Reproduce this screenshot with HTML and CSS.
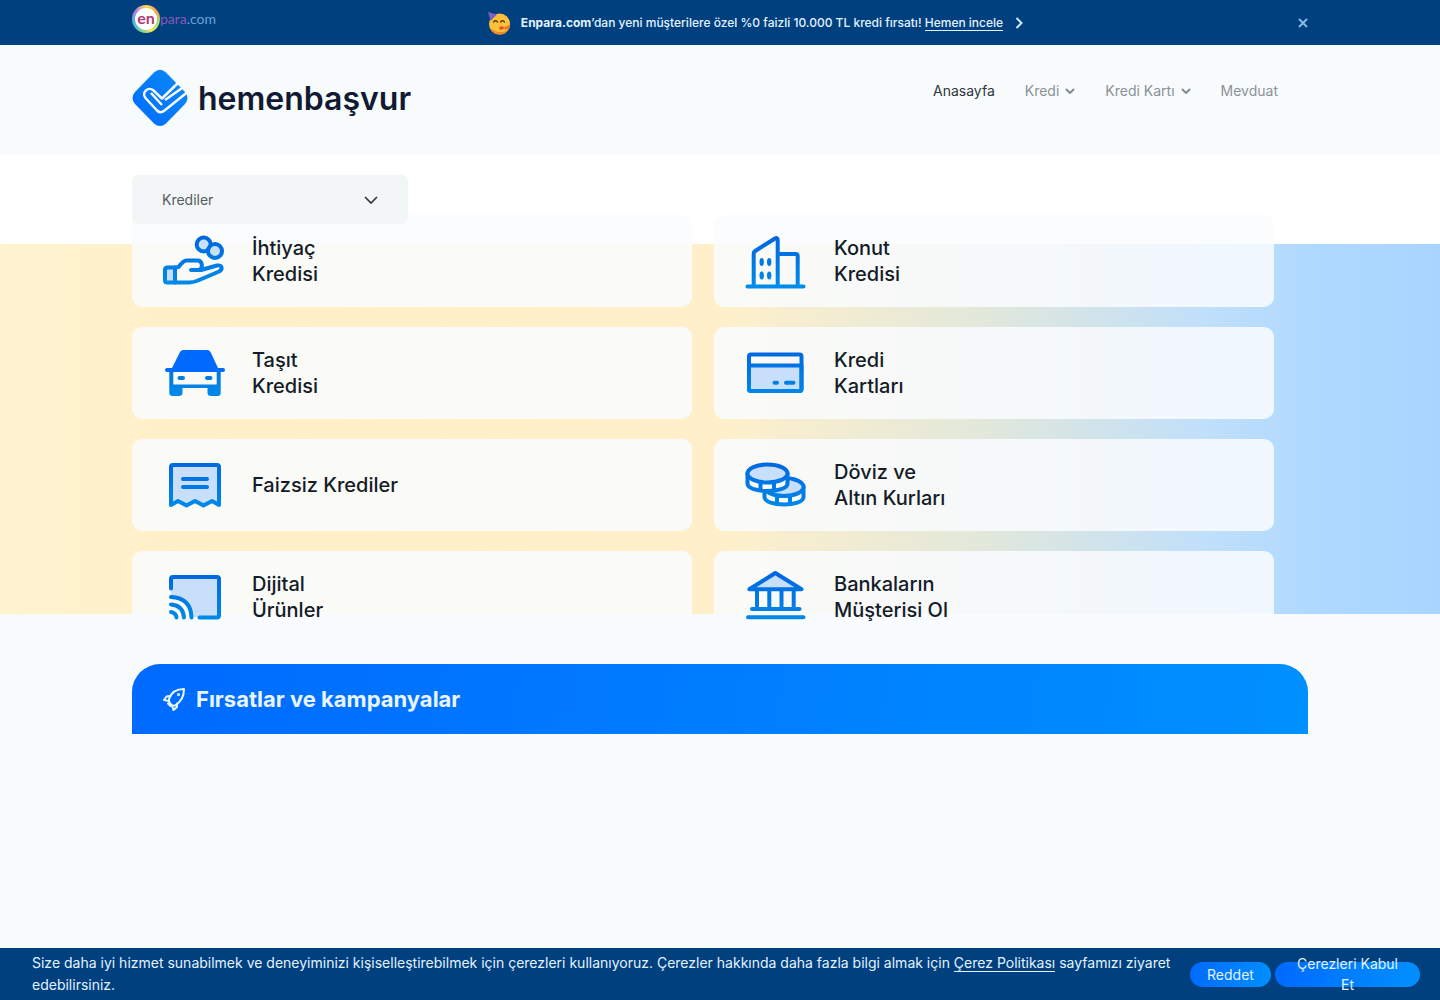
FILE: index.html
```html
<!DOCTYPE html>
<html lang="tr">
<head>
<meta charset="utf-8">
<meta name="viewport" content="width=device-width, initial-scale=1">
<title>hemenbaşvur</title>
<link rel="stylesheet" href="styles.css">
</head>
<body>
<svg class="defs" width="0" height="0" aria-hidden="true">
  <defs>
    <linearGradient id="blue" gradientUnits="userSpaceOnUse" x1="0" y1="8" x2="0" y2="58"><stop offset="0" stop-color="#0066e0"/><stop offset="1" stop-color="#008cea"/></linearGradient>
    <linearGradient id="logo" x1="0" y1="1" x2="1" y2="0"><stop offset="0" stop-color="#006aff"/><stop offset="1" stop-color="#0c8cf5"/></linearGradient>
  </defs>
</svg>

<div class="promo">
  <div class="container promo-row">
    <a class="enpara" href="#" aria-label="enpara.com">
      <span class="enpara-en">en</span><span class="enpara-para">para</span><span class="enpara-com">.com</span>
    </a>
    <p class="promo-text">
      <svg class="party" viewBox="0 0 24 24" width="24" height="24" aria-hidden="true">
        <circle cx="12.500" cy="13" r="10.500" fill="#fbc13a"/>
        <path d="M3 17a10.500 10.500 0 0 0 19 1c-5 4-13 4-19-1z" fill="#f08a24"/>
        <path d="M1 1l9 2.500L3.500 10z" fill="#7a5fc4"/>
        <path d="M6.500 11q2-2.500 4 0M13.500 11q2-2.500 4 0" fill="none" stroke="#6b3a12" stroke-width="1.300" stroke-linecap="round"/>
        <path d="M12 16l4-1 1 3-4 1z" fill="#d8542b"/>
        <path d="M17 16l6-2v3l-5 2z" fill="#e9762f"/>
      </svg>
      <span><b>Enpara.com</b>’dan yeni müşterilere özel %0 faizli 10.000 TL kredi fırsatı! <a href="#">Hemen incele</a></span>
      <svg viewBox="0 0 8 12" width="8" height="12" aria-hidden="true"><path d="M1.500 1L6.500 6l-5 5" fill="none" stroke="#cfeaff" stroke-width="2"/></svg>
    </p>
    <button class="promo-close" type="button" aria-label="Kapat">
      <svg viewBox="0 0 10 10" width="10" height="10"><path d="M1 1l8 8M9 1l-8 8" fill="none" stroke="#86b9ea" stroke-width="2"/></svg>
    </button>
  </div>
</div>

<header class="header">
  <div class="container header-row">
    <a class="brand" href="#">
      <svg viewBox="0 0 56 58" width="56" height="58" aria-hidden="true">
        <path d="M22 3.500Q28-2 34 3.500L53 23q5 6 0 12L34 54.500q-6 5-12 0L3 35q-5-6 0-12z" fill="url(#logo)"/>
        <g fill="none" stroke="#f8fbfb" stroke-width="2.500" stroke-linejoin="round">
          <path d="M48 12L30 29.500 21.500 21.500c-5-4.500-12.500 2-8 7.500L25 41.500q3.500 3.500 7.500 0L55 23.500"/>
          <path d="M19 24l11 12M33 31L53 17"/>
        </g>
      </svg>
      <span>hemenbaşvur</span>
    </a>
    <nav class="nav">
      <a class="active" href="#">Anasayfa</a>
      <a href="#">Kredi <svg viewBox="0 0 10 6" width="10" height="6"><path d="M1 1l4 4 4-4"/></svg></a>
      <a href="#">Kredi Kartı <svg viewBox="0 0 10 6" width="10" height="6"><path d="M1 1l4 4 4-4"/></svg></a>
      <a href="#">Mevduat</a>
    </nav>
  </div>
</header>

<main>
  <section class="hero">
    <div class="container">
      <div class="picker">
        <select aria-label="Ürün grubu"><option>Krediler</option></select>
        <svg viewBox="0 0 14 8" width="14" height="8" aria-hidden="true"><path d="M1 1l6 6 6-6" fill="none" stroke="#33383d" stroke-width="1.700"/></svg>
      </div>
      <div class="cards">
        <a class="card" href="#">
          <svg class="icon" viewBox="0 0 64 64">
            <circle class="tint" cx="41.700" cy="15.500" r="7"/><circle class="tint" cx="53" cy="22" r="7"/>
            <path class="tint" d="M3 41q0-2.500 2.500-2.500H13v15H5Q3 53.500 3 51z"/>
            <path d="M13 38.500l3.500-.5q5-6.500 8-6.500h11c5 0 6 8 1.500 9.500h-8M39 41l16-4.500c6-1 6 4.500 1 6.500L36 51.500Q31 53.500 27 53.500H13"/>
          </svg>
          <span>İhtiyaç<br>Kredisi</span>
        </a>
        <a class="card" href="#">
          <svg class="icon" viewBox="0 0 64 64">
            <path d="M3.500 57.500h56M9.700 57V24.500q0-1.500 1.500-2.500L31 9.500q2.700-1.500 2.700 1.500V57M34 25h17.500q2.200 0 2.200 2.200V57"/>
            <g class="solid"><ellipse cx="17.700" cy="33" rx="2.200" ry="4"/><ellipse cx="25.200" cy="33" rx="2.200" ry="4"/><ellipse cx="17.700" cy="46.500" rx="2.200" ry="4"/><ellipse cx="25.200" cy="46.500" rx="2.200" ry="4"/></g>
          </svg>
          <span>Konut<br>Kredisi</span>
        </a>
        <a class="card" href="#">
          <svg class="icon" viewBox="0 0 64 64">
            <g class="roof"><path d="M18 11q1-2 3.500-2H45q2.500 0 3.500 2l7.500 16h5q2 0 2 2t-2 2H5q-2 0-2-2t2-2h5z"/></g>
            <g class="solid"><path d="M7.300 29h4v14.500h43.400V29h4v23q0 3-3 3H49q-3.500 0-3.500-3.500V47h-25v4.500Q20.500 55 17 55h-6.500q-3.200 0-3.200-3z"/><rect x="15.500" y="35" width="7.500" height="4" rx="2"/><rect x="43" y="35" width="7.500" height="4" rx="2"/></g>
          </svg>
          <span>Taşıt<br>Kredisi</span>
        </a>
        <a class="card" href="#">
          <svg class="icon" viewBox="0 0 64 64">
            <path class="tint" d="M5 24.500h52.500V48q0 2-2 2H7q-2 0-2-2z"/>
            <rect x="5" y="13.500" width="52.500" height="36.500" rx="2"/>
            <path d="M30.500 41.700h2.500M42 41.700h7.500"/>
          </svg>
          <span>Kredi<br>Kartları</span>
        </a>
        <a class="card" href="#">
          <svg class="icon" viewBox="0 0 64 64">
            <path class="tint" d="M9 14q0-2 2-2h44q2 0 2 2v38l-7-4-8.500 4.500L33 48l-8.500 4.500L16 48l-7 4z"/>
            <path d="M21 26h24M21 34h24"/>
          </svg>
          <span>Faizsiz Krediler</span>
        </a>
        <a class="card" href="#">
          <svg class="icon" viewBox="0 0 64 64">
            <path d="M20.500 36v8c0 10 39 10 39 0V33.500"/>
            <ellipse class="tint" cx="40" cy="34" rx="19.500" ry="9"/>
            <path d="M33 43v8M46 43v8"/>
            <path d="M3.500 20v10.500c0 10 40 10 40 0V20z" fill="#f8fafb" stroke="none"/>
            <path d="M3.500 20v10.500c0 10 40 10 40 0V20M16.500 30v7M30 30v7"/>
            <ellipse class="tint" cx="23.500" cy="20.500" rx="20" ry="9"/>
          </svg>
          <span>Döviz ve<br>Altın Kurları</span>
        </a>
        <a class="card" href="#">
          <svg class="icon" viewBox="0 0 64 64">
            <path class="wash" d="M9 12h48v40H30Q29 33 9 31z"/>
            <path d="M9 23.500V14q0-2 2-2h44q2 0 2 2v36.500q0 2-2 2H37.500M9 32q20 1 20.500 20.500M9 39.500q12 1 13 13M9 47q5 1 5.500 5.500"/>
          </svg>
          <span>Dijital<br>Ürünler</span>
        </a>
        <a class="card" href="#">
          <svg class="icon" viewBox="0 0 64 64">
            <path class="tint" d="M31.300 8L57.500 24.300H5.300z"/>
            <path d="M13 25v19M25.300 25v19M37.500 25v19M49.700 25v19M8 44h47.500M4 52.300h55.500"/>
          </svg>
          <span>Bankaların<br>Müşterisi Ol</span>
        </a>
      </div>
    </div>
  </section>

  <section class="container">
    <h2 class="deals">
      <svg viewBox="0 0 24 24" width="24" height="24" fill="none" stroke="#e9f6ff" stroke-width="2" stroke-linejoin="round" stroke-linecap="round" aria-hidden="true">
        <path d="M7 12C9 6 14 2 22 2c0 7-3 13-9 16.500-3 1-7-3-6-6.500z"/>
        <path d="M8 9L4.500 9.500 2 13l5 1M15 16.500l0 3.500-3.500 3-1.500-4.500M6 16.500l2.500 2.500"/>
        <circle cx="16.500" cy="7.500" r=".6"/>
      </svg>
      Fırsatlar ve kampanyalar
    </h2>
  </section>
</main>

<aside class="cookies">
  <p>Size daha iyi hizmet sunabilmek ve deneyiminizi kişiselleştirebilmek için çerezleri kullanıyoruz. Çerezler hakkında daha fazla bilgi almak için <a href="#">Çerez Politikası</a> sayfamızı ziyaret edebilirsiniz.</p>
  <div class="cookie-actions">
    <button class="pill" type="button">Reddet</button>
    <button class="pill pill-wide" type="button">Çerezleri Kabul Et</button>
  </div>
</aside>
</body>
</html>
```
FILE: styles.css
```css
* { box-sizing: border-box; }

body {
  margin: 0;
  min-height: 100vh;
  background: #f8fbfb;
  color: #141c28;
  font-family: Inter, "Liberation Sans", sans-serif;
  font-size: 14px;
}

a { color: inherit; text-decoration: none; }
p, h2 { margin: 0; }
button { border: 0; font: inherit; cursor: pointer; }
svg { flex: none; }
.defs { position: absolute; }

.container {
  max-width: 1240px;
  margin: 0 auto;
  padding: 0 32px;
}

/* Promo strip */
.promo { background: #00407f; color: #e2f3ff; }
.promo-row {
  display: grid;
  grid-template-columns: 1fr auto 1fr;
  align-items: center;
  height: 45px;
}
.enpara {
  display: flex;
  align-items: center;
  align-self: start;
  margin-top: 5px;
  font-family: Lato, sans-serif;
  font-size: 14px;
  line-height: 24px;
}
.enpara-en {
  width: 28px;
  height: 28px;
  border: 3px solid transparent;
  border-radius: 50%;
  background: linear-gradient(#fff, #fff) padding-box, conic-gradient(#f6d95a, #f7a14b, #a9dc6b, #f1e35c, #6fd0a0, #44b8ee, #b67be0, #f6d95a) border-box;
  color: #b03a78;
  font-size: 16px;
  font-weight: 700;
  line-height: 20px;
  text-align: center;
}
.enpara-para { color: #8a56b8; }
.enpara-com { color: #6f9fd6; }
.promo-text {
  display: flex;
  align-items: center;
  gap: 12px;
  padding-left: 70px;
  font-size: 12px;
  font-weight: 500;
}
.promo-text a { border-bottom: 1px solid #e2f3ff; }
.party { margin-right: -2px; }
.promo-close {
  display: flex;
  justify-self: end;
  padding: 0;
  background: none;
}

/* Header */
.header-row {
  display: flex;
  justify-content: space-between;
  height: 109px;
}
.brand {
  display: flex;
  align-items: center;
  gap: 10px;
  height: 106px;
  color: #121a33;
  font-size: 32px;
  font-weight: 600;
}
.nav {
  display: flex;
  align-items: center;
  gap: 30px;
  height: 91px;
  padding-right: 30px;
  color: #8b9298;
}
.nav a { display: flex; align-items: center; gap: 6px; }
.nav svg { fill: none; stroke: #838a90; stroke-width: 2; }
.nav .active { color: #30363e; }

/* Product cards */
.hero {
  padding: 21px 0;
  background:
    linear-gradient(#fff, #fff) 0 0 / 100% 90px no-repeat,
    linear-gradient(90deg, #fff3d0 0, #ffefc8 15%, #fff0cb 50%, #e2e8da 68%, #bfdffb 84%, #aed8ff 92%, #a8d5ff 100%) 0 90px / 100% 370px no-repeat;
}
.picker {
  position: relative;
  z-index: 1;
  display: grid;
  align-items: center;
  width: 276px;
}
.picker select {
  grid-area: 1 / 1;
  height: 49px;
  padding: 0 30px;
  border: 0;
  border-radius: 6px;
  appearance: none;
  background: #f3f6f6;
  color: #555c64;
  font: inherit;
}
.picker svg {
  grid-area: 1 / 1;
  justify-self: end;
  margin-right: 30px;
  pointer-events: none;
}
.cards {
  display: grid;
  grid-template-columns: 1fr 1fr;
  gap: 20px 22px;
  margin-top: -9px;
  padding-right: 34px;
}
.card {
  display: flex;
  align-items: center;
  gap: 26px;
  height: 92px;
  padding: 0 30px;
  border-radius: 10px;
  background: rgba(249, 252, 254, .86);
  font-size: 20px;
  font-weight: 500;
  line-height: 26px;
}
.icon {
  width: 64px;
  height: 64px;
  fill: none;
  stroke: url(#blue);
  stroke-width: 4;
  stroke-linecap: round;
  stroke-linejoin: round;
}
.icon .tint { fill: #c8dffb; }
.icon .wash { fill: #c8dffb; stroke: none; }
.icon .solid { fill: url(#blue); stroke: none; }
.icon .roof { fill: #006aff; stroke: none; }

/* Campaigns */
.deals {
  display: flex;
  align-items: center;
  gap: 10px;
  height: 70px;
  padding: 0 30px;
  border-radius: 28px 28px 0 0;
  background: linear-gradient(100deg, #006aff, #0090ff);
  color: #e9f6ff;
  font-size: 22px;
  font-weight: 700;
}

/* Cookie notice */
.cookies {
  position: fixed;
  right: 0;
  bottom: 0;
  left: 0;
  display: flex;
  align-items: center;
  justify-content: space-between;
  gap: 12px;
  padding: 4px 20px 4px 32px;
  background: #00407f;
  color: #e2f3ff;
  font-size: 14px;
  line-height: 22px;
}
.cookies a { border-bottom: 1px solid #e2f3ff; }
.cookie-actions { display: flex; flex: none; gap: 4px; }
.pill {
  display: flex;
  align-items: center;
  justify-content: center;
  width: 81px;
  height: 25px;
  padding: 0 16px;
  border-radius: 13px;
  background: linear-gradient(100deg, #006aff, #0090ff);
  color: #e2f3ff;
  line-height: 21px;
}
.pill-wide { width: 145px; }
```
